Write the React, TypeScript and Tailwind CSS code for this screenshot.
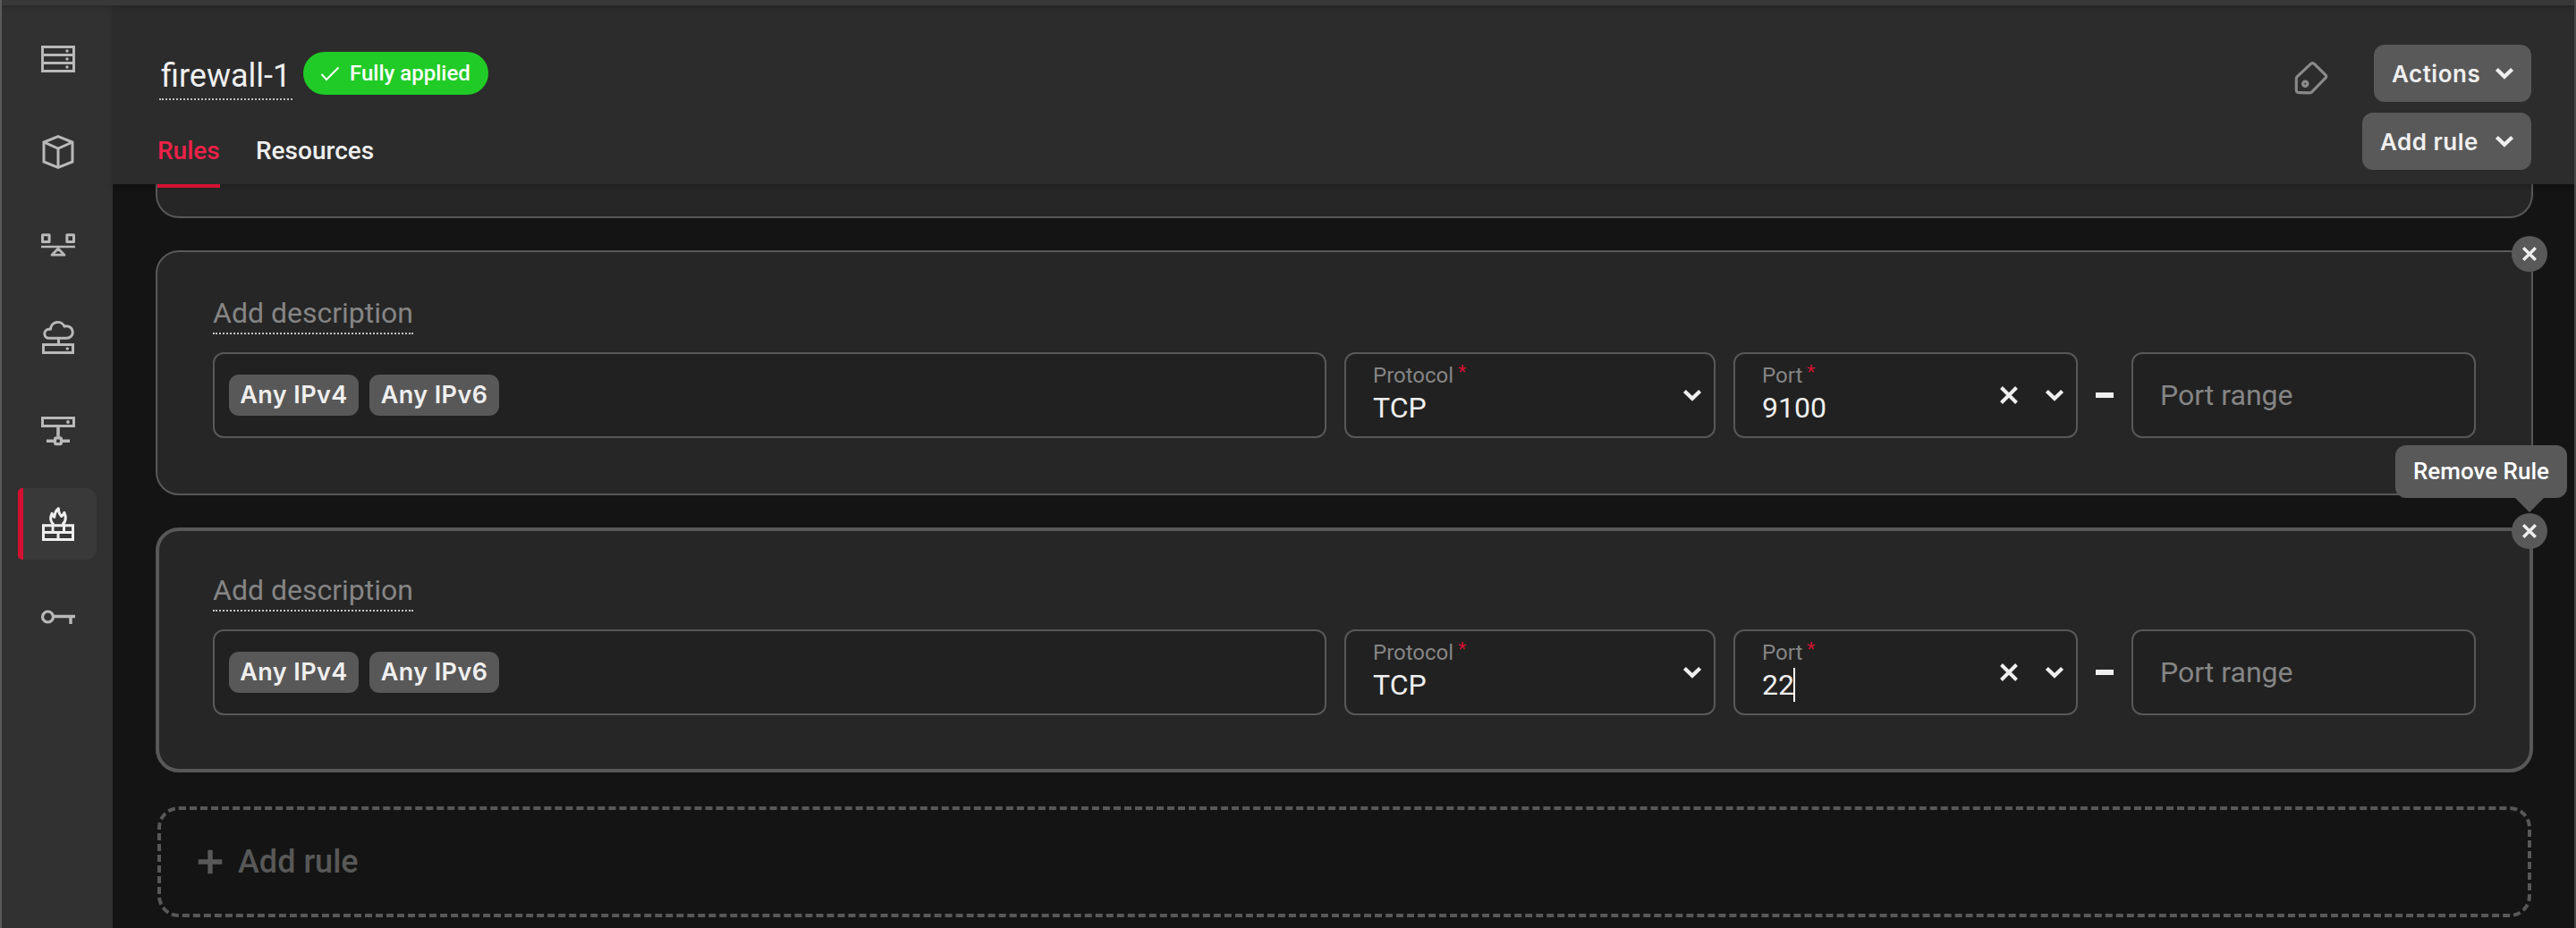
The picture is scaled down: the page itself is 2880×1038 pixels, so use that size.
import type { ReactNode } from "react";

const Svg = ({ size, children, className = "" }: { size: number; children: ReactNode; className?: string }) => (
  <svg
    width={size}
    height={size}
    viewBox={`0 0 ${size} ${size}`}
    fill="none"
    stroke="currentColor"
    className={`block shrink-0 ${className}`}
  >
    {children}
  </svg>
);

const ServerIcon = () => (
  <Svg size={40}>
    <path d="M2.5 6.5h35v27h-35zM1 15.5h38M1 24.5h38" strokeWidth="3" />
    <g fill="currentColor" stroke="none">
      <circle cx="30" cy="11" r="1.7" />
      <circle cx="30" cy="20" r="1.7" />
      <circle cx="30" cy="29" r="1.7" />
    </g>
  </Svg>
);

const CubeIcon = () => (
  <Svg size={40}>
    <path d="M20 2.6 36 9v22L20 37.4 4 31V9z" strokeWidth="3" />
    <path d="M4 9l16 7 16-7M20 16v21" strokeWidth="3" />
  </Svg>
);

const BalanceIcon = () => (
  <Svg size={40}>
    <path d="M2.5 8.8h7.6v7.6H2.5zM29.9 8.8h7.6v7.6h-7.6z" strokeWidth="3" strokeLinejoin="round" />
    <path d="M1 22h38" strokeWidth="2.6" />
    <path d="M20 24l7 7.2H13z" strokeWidth="2.8" strokeLinejoin="round" />
  </Svg>
);

const CloudIcon = () => (
  <Svg size={40}>
    <path
      d="M9.8 20.3a5 5 0 0 1 0-10h1.7a8.2 8.2 0 0 1 15.6-3.2 6.2 6.2 0 0 1 2.6-.3 6.7 6.7 0 0 1-.3 13.5z"
      strokeWidth="3"
      strokeLinejoin="round"
    />
    <path d="M20.5 21v6" strokeWidth="3" />
    <path d="M3.5 27.5h33v9h-33z" strokeWidth="3" />
    <circle cx="30.3" cy="32" r="1.7" fill="currentColor" stroke="none" />
  </Svg>
);

const NetworkIcon = () => (
  <Svg size={40}>
    <path d="M2.5 5.5h35v9h-35z" strokeWidth="3" />
    <circle cx="31" cy="10" r="1.9" fill="currentColor" stroke="none" />
    <path d="M20 15v11.5M7 31.3h8M25 31.3h8" strokeWidth="3.6" />
    <rect x="16.6" y="27.8" width="6.8" height="6.8" rx="1" strokeWidth="3.2" />
  </Svg>
);

const FirewallIcon = () => (
  <Svg size={40}>
    <path
      d="M15.2 20.6C11.5 18.4 10.6 13 13 8.4c.6 2.2 1.4 3.3 2.8 4 .4-4 1.5-7.4 4.6-9.6-.1 4 1.1 6.400 3.300 8.700 1.600-1 2.500-2.400 3.200-4.100 2.300 4.400 1.900 10.800-2.300 13.200"
      strokeWidth="3"
      strokeLinejoin="round"
    />
    <path d="M3.5 21.7h33v15.8h-33zM2 29.6h36M14 21v8.600M26.500 21v8.600M20 29.600v8" strokeWidth="3" />
  </Svg>
);

const KeyIcon = () => (
  <Svg size={40}>
    <circle cx="8.5" cy="20" r="6" strokeWidth="3.2" />
    <path d="M15 19.5h24M34 19.5v8.5" strokeWidth="3.4" />
  </Svg>
);

const Chevron = () => (
  <Svg size={24}>
    <path d="M3.4 7.4 12 15.8l8.6-8.4" strokeWidth="4.2" />
  </Svg>
);

const Cross = () => (
  <Svg size={24}>
    <path d="M3.5 3.5l17 17M20.5 3.5l-17 17" strokeWidth="4" />
  </Svg>
);

const TagIcon = () => (
  <Svg size={40} className="text-[#8a8a8a]">
    <path
      d="M19.6 4.3 4.3 18.7Q3.3 19.7 3.3 21v12.5q0 3 3 3.1l12 .3q1.4 0 2.4-1L36 20.2q1.6-1.7 0-3.4L23.6 4.6q-2-1.9-4-.3z"
      strokeWidth="3.1"
      strokeLinejoin="round"
    />
    <circle cx="13.3" cy="26.7" r="2.6" strokeWidth="3.4" />
  </Svg>
);

const navItems = [ServerIcon, CubeIcon, BalanceIcon, CloudIcon, NetworkIcon, FirewallIcon, KeyIcon];

const Sidebar = () => (
  <nav className="flex w-[124px] shrink-0 flex-col gap-6 bg-[#313131] pt-5 pl-[18px]">
    {navItems.map((Icon, i) =>
      Icon === FirewallIcon ? (
        <div
          key={i}
          className="flex h-20 w-[88px] items-center justify-center overflow-hidden rounded-l-[5px] rounded-r-xl bg-[#393939] text-[#efefef]"
        >
          <span className="h-full w-1.5 bg-[#d41131]" />
          <span className="flex flex-1 justify-center pr-1">
            <Icon />
          </span>
        </div>
      ) : (
        <div key={i} className="flex h-20 w-[90px] items-center justify-center text-[#b9b9b9]">
          <Icon />
        </div>
      ),
    )}
  </nav>
);

const DropButton = ({ label, width }: { label: string; width: string }) => (
  <button
    className={`flex h-16 items-center justify-between rounded-xl bg-[#595959] pr-[18px] pl-5 font-[Inter,sans-serif] text-[26px] font-semibold tracking-[0.5px] text-[#efefef] ${width}`}
  >
    <span className="whitespace-nowrap">{label}</span>
    <Chevron />
  </button>
);

const Header = () => (
  <header className="relative z-10 flex h-[200px] shrink-0 justify-between bg-[#2c2c2c] pr-12 pl-[50px] shadow-[0_2px_6px_rgba(0,0,0,0.2)]">
    <div className="flex flex-col">
      <div className="flex pt-[52px]">
        <h1 className="mt-[3px] ml-0.5 h-[51px] w-[149px] border-b-2 border-dotted border-[#bdbdbd] pl-0.5 text-[36px] leading-[48px] whitespace-nowrap text-[#efefef]">
          firewall-1
        </h1>
        <span className="ml-3 flex h-12 w-[207px] items-center rounded-full bg-[#21cb27] pl-[18px] text-[24px] font-medium whitespace-nowrap text-white">
          <Svg size={24} className="mr-2.5">
            <path d="M2.5 13l5.5 6L21.5 5.5" strokeWidth="2" />
          </Svg>
          Fully applied
        </span>
      </div>
      <div className="mt-[41px] flex gap-10 text-[28px] leading-8 font-medium text-[#efefef]">
        <div className="relative w-[70px] text-[#ee2148]">
          Rules
          <span className="absolute top-[53px] left-0 h-1 w-[70px] bg-[#d41131]" />
        </div>
        <div>Resources</div>
      </div>
    </div>
    <div className="flex pt-11">
      <div className="mt-[17px] mr-[50px]">
        <TagIcon />
      </div>
      <div className="-ml-[13px] flex flex-col items-end gap-3">
        <DropButton label="Actions" width="w-[176px]" />
        <DropButton label="Add rule" width="w-[189px]" />
      </div>
    </div>
  </header>
);

const Chip = ({ label }: { label: string }) => (
  <span className="flex h-[46px] w-[145px] items-center justify-center rounded-[11px] bg-[#585858] font-[Inter,sans-serif] text-[27px] font-semibold tracking-[0.4px] whitespace-nowrap text-[#efefef]">
    {label}
  </span>
);

const fieldBox = "flex h-24 shrink-0 items-center rounded-xl border-2 border-[#585858] bg-[#212121]";

const Labelled = ({ label, value, caret }: { label: string; value: string; caret?: boolean }) => (
  <div className="flex-1 pb-[3px] pl-[30px]">
    <div className="flex text-[24px] leading-7 text-[#858585]">
      {label}
      <span className="-mt-1 ml-[5px] text-[21px] text-[#d41131]">*</span>
    </div>
    <div className="mt-[3px] flex h-[38px] items-center text-[32px] leading-[38px] text-[#efefef]">
      {value}
      {caret && <span className="-ml-px h-[38px] w-0.5 bg-white" />}
    </div>
  </div>
);

const CloseButton = () => (
  <button className="flex size-10 items-center justify-center rounded-full bg-[#595959] text-[#efefef]">
    <Svg size={20}>
      <path d="M3.2 3.2l13.6 13.6M16.8 3.2 3.2 16.8" strokeWidth="3.4" />
    </Svg>
  </button>
);

const RuleCard = ({ port, active }: { port: string; active?: boolean }) => (
  <section
    className={`relative h-[274px] shrink-0 rounded-[26px] border-[#585858] bg-[#262626] ${
      active ? "border-4 px-[60px] pt-[47px]" : "border-2 px-[62px] pt-[49px]"
    }`}
  >
    <div className="h-[43px] w-56 border-b-2 border-dotted border-[#c4c4c4] text-[32px] leading-[38px] whitespace-nowrap text-[#858585]">
      Add description
    </div>
    <div className="mt-5 flex items-center gap-5">
      <div className={`${fieldBox} min-w-0 flex-1 gap-3 pl-4`}>
        <Chip label="Any IPv4" />
        <Chip label="Any IPv6" />
      </div>
      <div className={`${fieldBox} w-[415px] pr-3 text-[#efefef]`}>
        <Labelled label="Protocol" value="TCP" />
        <Chevron />
      </div>
      <div className={`${fieldBox} w-[385px] pr-3 text-[#efefef]`}>
        <Labelled label="Port" value={port} caret={active} />
        <Cross />
        <span className="w-[27px]" />
        <Chevron />
      </div>
      <span className="h-1.5 w-5 bg-[#efefef]" />
      <div className={`${fieldBox} w-[385px] pl-[30px] text-[32px] text-[#858585]`}>Port range</div>
    </div>
    <div className={active ? "absolute -top-5 -right-5" : "absolute -top-[18px] -right-[18px]"}>
      <CloseButton />
    </div>
    {active && (
      <div className="absolute -top-24 -right-[42px] flex h-[59px] w-48 items-center justify-center rounded-xl bg-[#595959] text-[26px] font-medium whitespace-nowrap text-white">
        Remove Rule
        <svg width="32" height="16" viewBox="0 0 32 16" className="absolute top-[58.5px] left-[134px]" fill="#595959">
          <path d="M0 0h32L16 16z" />
        </svg>
      </div>
    )}
  </section>
);

export default function App() {
  return (
    <div className="flex h-[1038px] w-[2880px] flex-col overflow-hidden border-r-2 border-l-2 border-r-[#484848] border-l-[#5a5a5a] bg-[#141414] font-[Roboto,sans-serif]">
      <div className="relative z-20 h-1.5 shrink-0 bg-[#383838] shadow-[0_1px_6px_rgba(0,0,0,0.25)]" />
      <div className="flex min-h-0 flex-1">
        <Sidebar />
        <main className="flex min-w-0 flex-1 flex-col">
          <Header />
          <div className="flex flex-col gap-9 pr-[46px] pl-12">
            <div className="h-[38px] shrink-0 rounded-b-[26px] border-2 border-t-0 border-[#585858] bg-[#262626]" />
            <RuleCard port="9100" />
            <RuleCard port="22" active />
            <button className="mt-0.5 mr-0.5 ml-0.5 flex h-[124px] shrink-0 items-center rounded-[24px] border-4 border-dashed border-[#585858] pl-[41px] text-[36px] font-medium text-[#585858]">
              <Svg size={28} className="mr-[17px]">
                <path d="M14 .7v26.6M.7 14h26.6" strokeWidth="5.4" />
              </Svg>
              Add rule
            </button>
          </div>
        </main>
      </div>
    </div>
  );
}
